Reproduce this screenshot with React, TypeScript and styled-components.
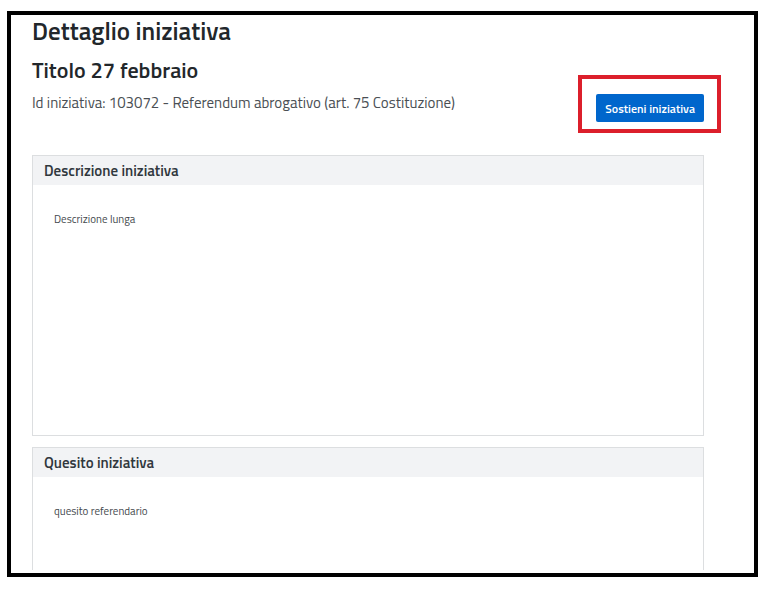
import React from 'react';
import styled, { createGlobalStyle } from 'styled-components';

const GlobalStyle = createGlobalStyle`
  * {
    box-sizing: border-box;
  }

  body {
    margin: 0;
    background: #fff;
    color: #30373d;
    font-family: 'Titillium Web', Lato, 'Open Sans', sans-serif;
  }
`;

const Frame = styled.main`
  margin: 11px 9px 15px 7px;
  padding: 0 50px 3px 21px;
  border: 4px solid #000;
`;

const Header = styled.header`
  display: flex;
  align-items: flex-end;
  justify-content: space-between;
  padding-bottom: 33px;
`;

const Intro = styled.div`
  padding-bottom: 7px;
`;

const Title = styled.h1`
  margin: 0;
  font-size: 25px;
  font-weight: 600;
  line-height: 32px;
  color: #22272b;
`;

const Subtitle = styled.h2`
  margin: 0;
  padding: 7px 0 5px;
  font-size: 22px;
  font-weight: 600;
  line-height: 32px;
  color: #22272b;
`;

const Meta = styled.p`
  margin: 0;
  font-size: 15px;
  line-height: 24px;
  color: #4a4f54;
`;

const Highlight = styled.div`
  position: relative;
  flex: none;

  &::after {
    content: '';
    position: absolute;
    inset: -19px -17px -11px -18px;
    border: 4px solid #dc1f2b;
    pointer-events: none;
  }
`;

const Button = styled.button`
  display: block;
  height: 28px;
  padding: 0 9px;
  border: 0;
  border-radius: 2px;
  background: #0066cc;
  color: #fff;
  font-family: inherit;
  font-size: 12px;
  font-weight: 600;
  cursor: pointer;
`;

const Card = styled.section<{ $minHeight: number; $open?: boolean }>`
  min-height: ${({ $minHeight }) => $minHeight}px;
  border: 1px solid #dcdee0;
  border-bottom-width: ${({ $open }) => ($open ? 0 : 1)}px;

  & + & {
    margin-top: 11px;
  }
`;

const CardTitle = styled.h3`
  margin: 0;
  padding: 0 11px;
  background: #f2f3f5;
  font-size: 15px;
  font-weight: 600;
  line-height: 29px;
`;

const CardText = styled.p`
  margin: 0;
  padding: 24px 21px;
  font-size: 11px;
  line-height: 20px;
  color: #43484d;
`;

const App = () => {
  return (
    <>
      <GlobalStyle />
      <Frame>
        <Header>
          <Intro>
            <Title>Dettaglio iniziativa</Title>
            <Subtitle>Titolo 27 febbraio</Subtitle>
            <Meta>Id iniziativa: 103072 - Referendum abrogativo (art. 75 Costituzione)</Meta>
          </Intro>
          <Highlight>
            <Button type="button">Sostieni iniziativa</Button>
          </Highlight>
        </Header>
        <Card $minHeight={281}>
          <CardTitle>Descrizione iniziativa</CardTitle>
          <CardText>Descrizione lunga</CardText>
        </Card>
        <Card $minHeight={123} $open>
          <CardTitle>Quesito iniziativa</CardTitle>
          <CardText>quesito referendario</CardText>
        </Card>
      </Frame>
    </>
  );
};

export default App;
